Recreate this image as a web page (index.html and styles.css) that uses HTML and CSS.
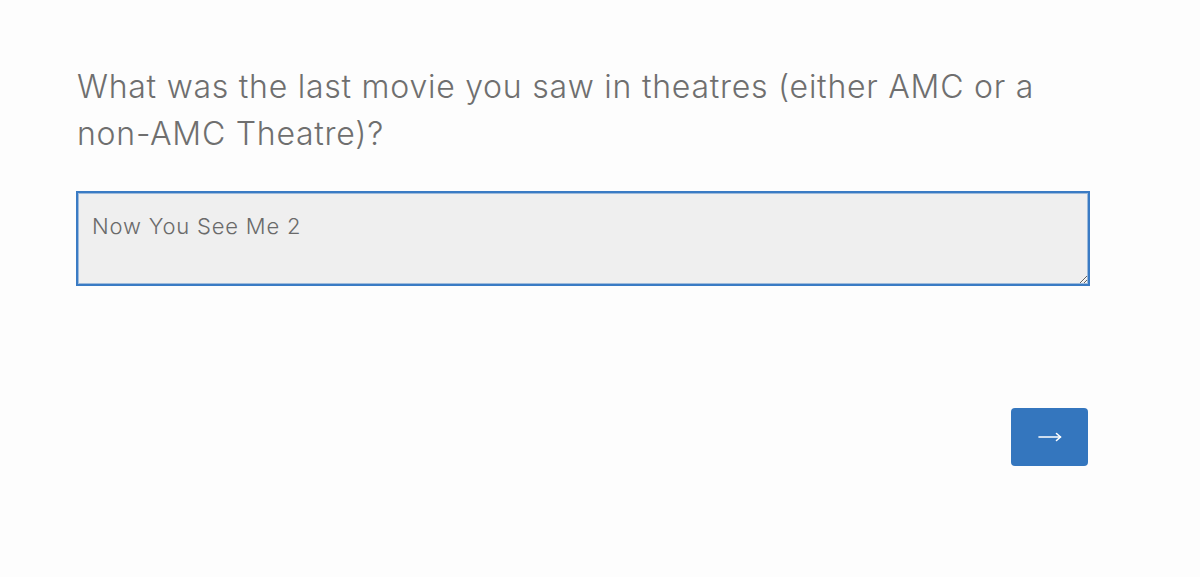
FILE: index.html
```html
<!DOCTYPE html>
<html>
<head>
<meta charset="utf-8">
<link rel="stylesheet" href="styles.css">
</head>
<body>
<main class="page">
  <h1 class="question">What was the last movie you saw in theatres (either AMC or a <span class="nw">non-AMC</span> Theatre)?</h1>
  <textarea class="answer">Now You See Me 2</textarea>
  <div class="actions">
    <button class="next" type="button" aria-label="Next">
      <svg width="24" height="10" viewBox="0 0 24 10" fill="none" stroke="#fff" stroke-width="1.6" stroke-linecap="round" stroke-linejoin="round">
        <path d="M1 5H22.5"/>
        <path d="M18.5 1.5L22.5 5L18.5 8.5"/>
      </svg>
    </button>
  </div>
</main>
</body>
</html>
```

FILE: styles.css
```css
html, body {
  margin: 0;
  padding: 0;
  background: #fdfdfd;
}
body {
  font-family: "Inter", "Open Sans", sans-serif;
  color: #6f6f6f;
}
.page {
  width: 1014px;
  margin-left: 76px;
  padding-top: 63px;
  display: flex;
  flex-direction: column;
}
.question {
  margin: 0 0 0 1px;
  font-weight: 300;
  font-size: 32px;
  letter-spacing: 0.75px;
  line-height: 47px;
  width: 990px;
  color: #6f6f6f;
}
.nw {
  white-space: nowrap;
}
.answer {
  margin-top: 34px;
  box-sizing: border-box;
  width: 1014px;
  height: 95px;
  border: 2px solid #3a7bc4;
  box-shadow: inset 0 0 0 1px rgba(58, 123, 196, 0.45);
  background: #efefef;
  font-family: "Inter", "Open Sans", sans-serif;
  font-weight: 300;
  font-size: 22px;
  letter-spacing: 0.8px;
  color: #6a6a6a;
  padding: 20px 14px;
  outline: none;
  resize: vertical;
}
.actions {
  display: flex;
  justify-content: flex-end;
  margin-top: 122px;
  padding-right: 2px;
}
.next {
  width: 77px;
  height: 58px;
  border: none;
  border-radius: 4px;
  background: #3476be;
  display: flex;
  align-items: center;
  justify-content: center;
  padding: 0;
  cursor: pointer;
}
.next svg {
  display: block;
  margin-left: 1px;
}
```
